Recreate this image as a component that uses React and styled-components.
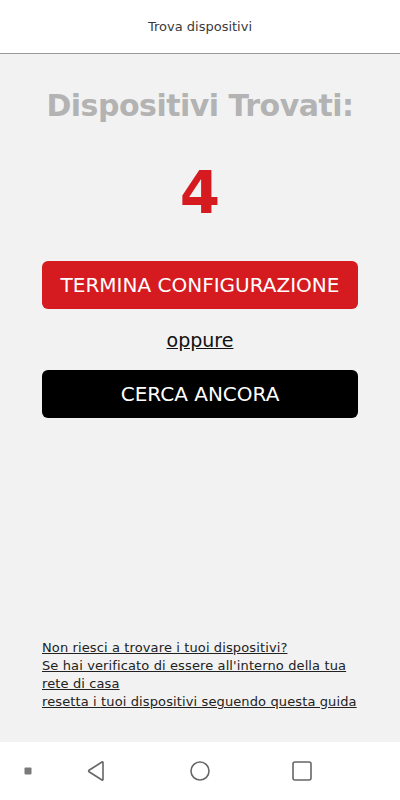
import React from "react";
import styled, { createGlobalStyle } from "styled-components";

const GlobalStyle = createGlobalStyle`
	html, body {
		margin: 0;
		padding: 0;
		background: #f2f2f2;
	}
	body {
		font-family: "DejaVu Sans", "Liberation Sans", sans-serif;
	}
`;

const Root = styled.div`
	width: 400px;
	height: 800px;
	display: flex;
	flex-direction: column;
	background: #f2f2f2;
`;

const Header = styled.div`
	height: 54px;
	background: #fff;
	border-bottom: 1px solid #9a9a9a;
	display: flex;
	align-items: center;
	justify-content: center;
	font-size: 13px;
	color: #3a3a3a;
	box-sizing: border-box;
`;

const Content = styled.div`
	flex: 1;
	display: flex;
	flex-direction: column;
	padding: 0 42px;
`;

const Title = styled.h1`
	margin: 34px 0 0;
	text-align: center;
	font-size: 30px;
	font-weight: 700;
	color: #b3b3b3;
	white-space: nowrap;
	letter-spacing: -0.5px;
`;

const Count = styled.div`
	margin-top: 35px;
	text-align: center;
	font-size: 58px;
	font-weight: 700;
	color: #d51b20;
	line-height: 70px;
`;

const Button = styled.button`
	height: 48px;
	width: 100%;
	border: none;
	border-radius: 6px;
	background: ${(p) => (p.$dark ? "#000" : "#d51b20")};
	color: #fff;
	font-family: inherit;
	font-size: 20px;
	display: flex;
	align-items: center;
	justify-content: center;
	white-space: nowrap;
`;

const Actions = styled.div`
	margin-top: 33px;
	display: flex;
	flex-direction: column;
	align-items: center;
`;

const Or = styled.a`
	margin: 19px 0 18px;
	font-size: 19px;
	color: #111;
	text-decoration: underline;
	line-height: 24px;
`;

const Help = styled.div`
	margin-top: auto;
	margin-bottom: 31px;
	display: flex;
	flex-direction: column;
`;

const HelpLine = styled.a`
	font-size: 13px;
	line-height: 18px;
	color: #222;
	text-decoration: underline;
	white-space: nowrap;
	letter-spacing: 0.12px;
`;

const NavBar = styled.div`
	height: 58px;
	background: #fff;
	display: flex;
	align-items: center;
`;

const NavSlot = styled.div`
	width: ${(p) => p.$w}px;
	display: flex;
	justify-content: center;
	align-items: center;
`;

export default function App() {
	return (
		<Root>
			<GlobalStyle />
			<Header>Trova dispositivi</Header>
			<Content>
				<Title>Dispositivi Trovati:</Title>
				<Count>4</Count>
				<Actions>
					<Button>TERMINA CONFIGURAZIONE</Button>
					<Or>oppure</Or>
					<Button $dark>CERCA ANCORA</Button>
				</Actions>
				<Help>
					<HelpLine>Non riesci a trovare i tuoi dispositivi?</HelpLine>
					<HelpLine>Se hai verificato di essere all'interno della tua</HelpLine>
					<HelpLine>rete di casa</HelpLine>
					<HelpLine>resetta i tuoi dispositivi seguendo questa guida</HelpLine>
				</Help>
			</Content>
			<NavBar>
				<NavSlot $w={56}>
					<svg width="8" height="8" viewBox="0 0 8 8">
						<rect x="0.5" y="0.5" width="7" height="7" rx="1" fill="#7a7a7a" />
					</svg>
				</NavSlot>
				<NavSlot $w={82}>
					<svg width="22" height="22" viewBox="0 0 22 22">
						<path d="M17 2.5 L17 19.5 Q17 20.5 16 20 L3 11.8 Q2.3 11 3 10.2 L16 2 Q17 1.5 17 2.5 Z" fill="none" stroke="#666" strokeWidth="1.6" strokeLinejoin="round" />
					</svg>
				</NavSlot>
				<NavSlot $w={124}>
					<svg width="22" height="22" viewBox="0 0 22 22">
						<circle cx="11" cy="11" r="9" fill="none" stroke="#666" strokeWidth="1.6" />
					</svg>
				</NavSlot>
				<NavSlot $w={80}>
					<svg width="22" height="22" viewBox="0 0 22 22">
						<rect x="2" y="2" width="18" height="18" rx="2" fill="none" stroke="#666" strokeWidth="1.6" />
					</svg>
				</NavSlot>
			</NavBar>
		</Root>
	);
}
